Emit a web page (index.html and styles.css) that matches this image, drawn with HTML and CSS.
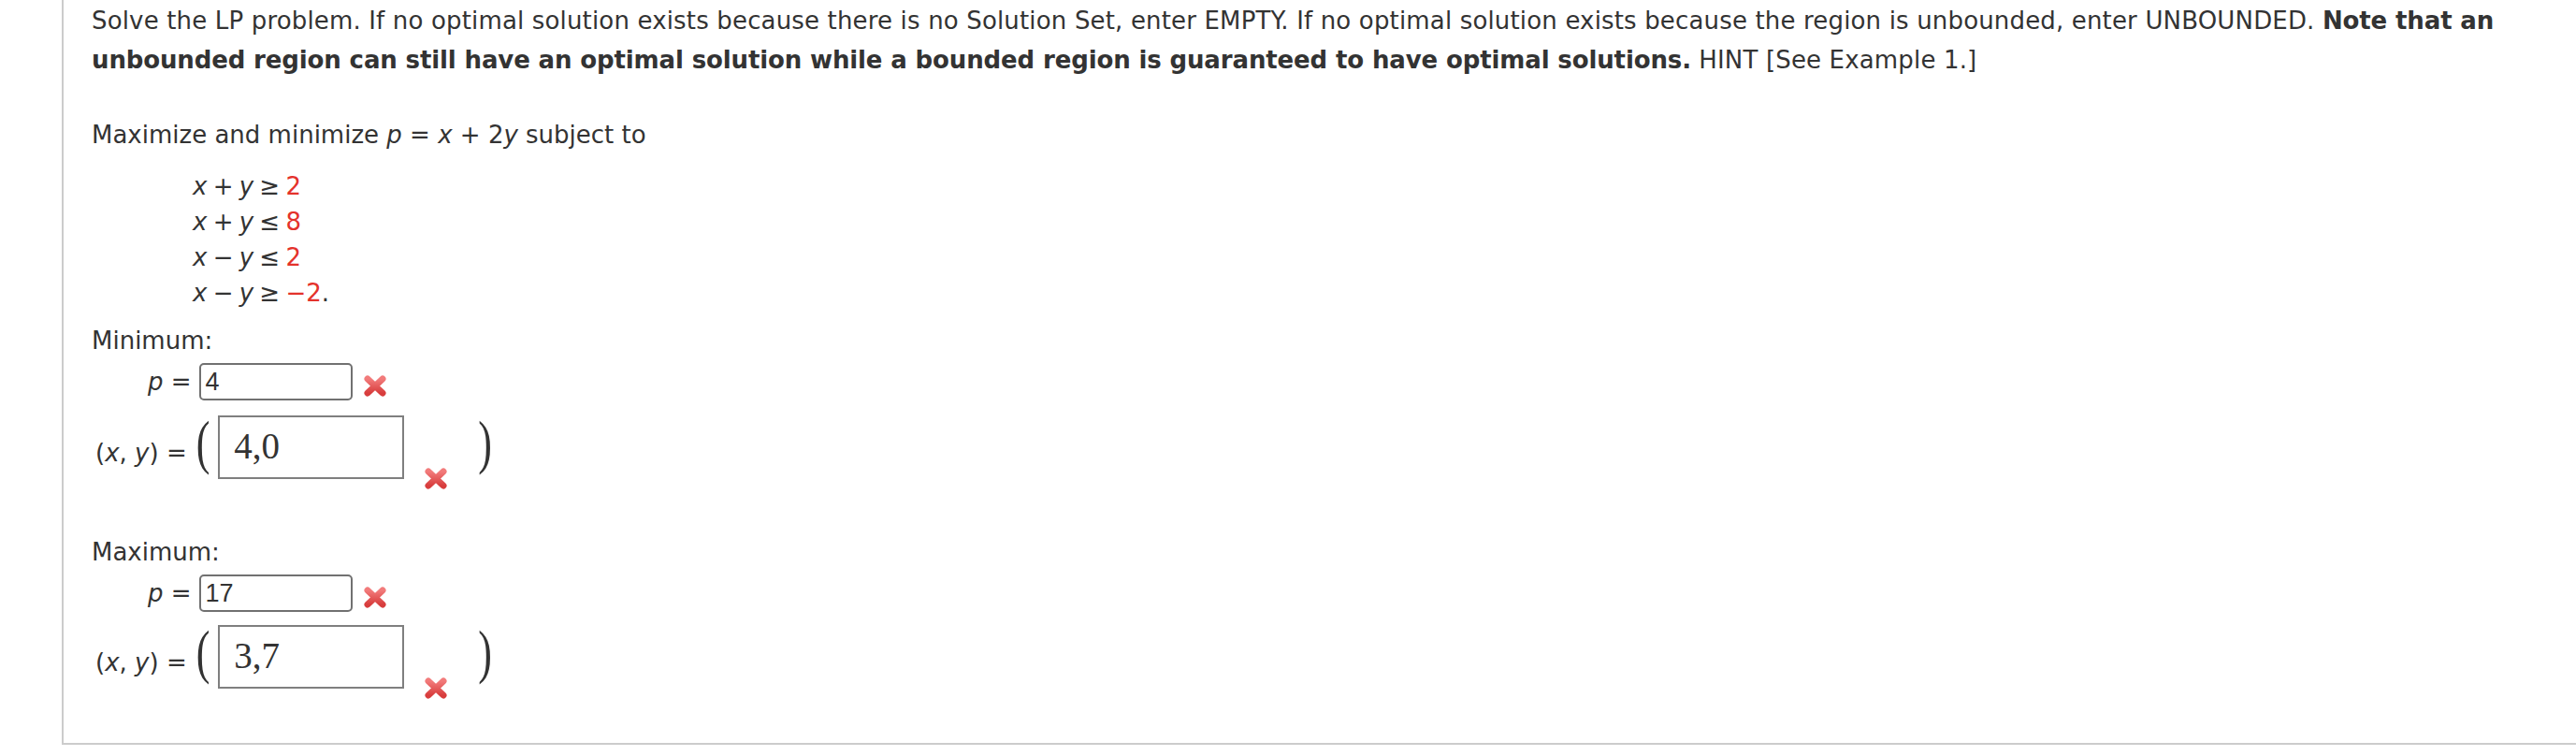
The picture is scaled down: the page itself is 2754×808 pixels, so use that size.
FILE: index.html
```html
<!DOCTYPE html>
<html>
<head>
<meta charset="utf-8">
<link rel="stylesheet" href="styles.css">
</head>
<body>
<svg class="defs" width="0" height="0">
  <defs>
    <linearGradient id="xg" x1="0" y1="0" x2="0" y2="1">
      <stop offset="0" stop-color="#f27b7b"/>
      <stop offset="1" stop-color="#d83d3d"/>
    </linearGradient>
  </defs>
</svg>
<div class="question">
  <p class="intro">Solve the LP problem. If no optimal solution exists because there is no Solution Set, enter EMPTY. If no optimal solution exists because the region is unbounded, enter UNBOUNDED. <b>Note that an unbounded region can still have an optimal solution while a bounded region is guaranteed to have optimal solutions.</b> HINT [See Example 1.]</p>
  <p class="objective">Maximize and minimize <i>p</i> = <i>x</i> + 2<i>y</i> subject to</p>
  <div class="constraints">
    <div><i>x</i> + <i>y</i> ≥ <span class="red">2</span></div>
    <div><i>x</i> + <i>y</i> ≤ <span class="red">8</span></div>
    <div><i>x</i> − <i>y</i> ≤ <span class="red">2</span></div>
    <div><i>x</i> − <i>y</i> ≥ <span class="red">−2</span>.</div>
  </div>

  <div class="label">Minimum:</div>
  <div class="prow">
    <span class="plabel"><i>p</i> =</span>
    <span class="pbox">4</span>
    <svg class="xmark" viewBox="0 0 28 27"><path d="M6 6 L22 21 M22 6 L6 21" stroke="url(#xg)" stroke-width="7" stroke-linecap="round" fill="none"/></svg>
  </div>
  <div class="xyrow">
    <span class="xylabel">(<i>x</i>, <i>y</i>) =</span>
    <span class="paren open">(</span>
    <span class="xybox">4,0</span>
    <svg class="xmark small" viewBox="0 0 28 27"><path d="M6 6 L22 21 M22 6 L6 21" stroke="url(#xg)" stroke-width="7" stroke-linecap="round" fill="none"/></svg>
    <span class="paren close">)</span>
  </div>

  <div class="label max">Maximum:</div>
  <div class="prow">
    <span class="plabel"><i>p</i> =</span>
    <span class="pbox">17</span>
    <svg class="xmark" viewBox="0 0 28 27"><path d="M6 6 L22 21 M22 6 L6 21" stroke="url(#xg)" stroke-width="7" stroke-linecap="round" fill="none"/></svg>
  </div>
  <div class="xyrow second">
    <span class="xylabel">(<i>x</i>, <i>y</i>) =</span>
    <span class="paren open">(</span>
    <span class="xybox">3,7</span>
    <svg class="xmark small" viewBox="0 0 28 27"><path d="M6 6 L22 21 M22 6 L6 21" stroke="url(#xg)" stroke-width="7" stroke-linecap="round" fill="none"/></svg>
    <span class="paren close">)</span>
  </div>
</div>
</body>
</html>
```

FILE: styles.css
```css
html, body {
  margin: 0;
  padding: 0;
  background: #ffffff;
}

.defs {
  position: absolute;
  width: 0;
  height: 0;
}

.question {
  margin-left: 66px;
  height: 796px;
  box-sizing: border-box;
  border-left: 2px solid #cccccc;
  border-bottom: 2px solid #cccccc;
  padding-left: 30px;
  font-family: "DejaVu Sans", Verdana, sans-serif;
  font-size: 26px;
  color: #333333;
}

.intro {
  margin: 0;
  padding-top: 1px;
  line-height: 42px;
  letter-spacing: 0.16px;
}

.intro b {
  letter-spacing: -0.13px;
}

.objective {
  margin: 38px 0 0 0;
  line-height: 42px;
}

.constraints {
  margin-top: 15px;
  padding-left: 108px;
  line-height: 38px;
  word-spacing: -2px;
}

.red {
  color: #e4322b;
}

.label {
  margin-top: 12px;
  line-height: 40px;
}

.label.max {
  margin-top: 58px;
}

.prow {
  display: flex;
  align-items: flex-start;
  margin-top: 4px;
  padding-left: 60px;
}

.plabel {
  line-height: 40px;
  white-space: nowrap;
}

.pbox {
  width: 164px;
  height: 40px;
  box-sizing: border-box;
  margin-left: 8px;
  border: 2px solid #717171;
  border-radius: 5px;
  padding-left: 5px;
  font-family: "Liberation Sans", Arial, sans-serif;
  font-size: 27px;
  line-height: 37px;
  color: #333333;
}

.xmark {
  width: 28px;
  height: 27px;
  margin-left: 10px;
  margin-top: 11px;
  flex: none;
}

.xmark.small {
  margin-left: 20px;
  margin-top: 54px;
}

.xyrow {
  display: flex;
  align-items: flex-start;
  height: 68px;
  margin-top: 16px;
  padding-left: 4px;
}

.xyrow.second {
  margin-top: 14px;
}

.xylabel {
  margin-top: 20px;
  line-height: 40px;
  white-space: nowrap;
}

.paren {
  display: inline-block;
  font-family: "Liberation Serif", "Times New Roman", serif;
  font-size: 44px;
  line-height: 44px;
  margin-top: -2px;
  transform: scaleY(1.45);
  transform-origin: center top;
  color: #333333;
}

.paren.open {
  margin-left: 10px;
}

.paren.close {
  margin-left: 31px;
}

.xybox {
  width: 199px;
  height: 68px;
  box-sizing: border-box;
  margin-left: 9px;
  border: 2px solid #7f7f7f;
  padding-left: 15px;
  padding-top: 11px;
  font-family: "Liberation Serif", "Times New Roman", serif;
  font-size: 39px;
  line-height: 40px;
  color: #333333;
}
```
